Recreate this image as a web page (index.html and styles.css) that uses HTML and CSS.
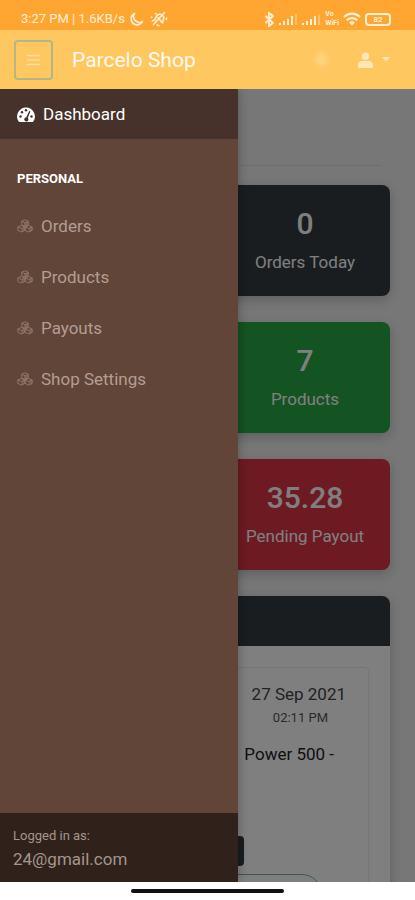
FILE: index.html
```html
<!DOCTYPE html>
<html lang="en">
<head>
<meta charset="utf-8">
<meta name="viewport" content="width=device-width, initial-scale=1">
<title>Parcelo Shop</title>
<link rel="stylesheet" href="styles.css">
</head>
<body>
<svg width="0" height="0" class="sprite" aria-hidden="true">
  <symbol id="cubes" viewBox="0 0 16 14">
    <g fill="none" stroke="currentColor" stroke-width=".9" stroke-linejoin="round">
      <path d="M8 .8l3.300 1.400v3.600L8 7.300 4.700 5.800V2.200z"/>
      <path d="M4.300 6.500l3.500 1.400v3.600L4.300 13 .8 11.500V7.900z"/>
      <path d="M11.700 6.500l3.500 1.400v3.600L11.700 13 8.200 11.500V7.900z"/>
      <path d="M4.700 2.400L8 3.800l3.300-1.400M8 3.800v3.300M.8 8l3.500 1.500L7.800 8M8.200 8l3.500 1.500L15.200 8"/>
    </g>
    <path fill="currentColor" d="M8 3.800l3.300-1.400v3.400L8 7.300zM4.300 9.500L7.800 8v3.500L4.300 13zM11.700 9.500L15.200 8v3.500L11.700 13z" opacity=".5"/>
  </symbol>
  <symbol id="signal" viewBox="0 0 19 12">
    <g fill="currentColor"><path d="M0 10h2v2H0zM4 8h2v4H4zM8 6h2v6H8zM12 3h2v9h-2z"/><path d="M16 1h2v11h-2z" opacity=".35"/></g>
  </symbol>
</svg>

<div class="status">
  <span class="status-text">3:27 PM | 1.6KB/s</span>
  <svg width="15" height="15" viewBox="0 0 15 15"><path d="M5.500 1.500A6 6 0 1 0 13.500 9.500 5.800 5.800 0 0 1 5.500 1.500z" fill="none" stroke="currentColor" stroke-width="1.700" stroke-linejoin="round"/></svg>
  <svg class="bell" width="18" height="16" viewBox="0 0 18 16"><g fill="none" stroke="currentColor" stroke-width="1.600" stroke-linecap="round" stroke-linejoin="round"><path d="M2.500 10l2.500-1.500C6 5 8 2.500 11 3.500S14.500 7 13 9.500L12.500 12M14.500 1.500L3.500 13.500M8 6.500l4 5M7 14l2 .8"/><path d="M1.500 6v.5M16.500 7v1.500M5.500 2.500l.5.500"/></g></svg>
  <span class="status-gap"></span>
  <svg width="11" height="15" viewBox="0 0 11 15"><path d="M1.500 4l7.500 7-4 3.200V.8L9 4l-7.500 7" fill="none" stroke="currentColor" stroke-width="1.900"/></svg>
  <svg width="19" height="12"><use href="#signal"/></svg>
  <svg width="19" height="12"><use href="#signal"/></svg>
  <span class="vowifi"><span>Vo</span><span>WiFi</span></span>
  <svg width="18" height="14" viewBox="0 0 18 14"><g fill="none" stroke="currentColor" stroke-width="2.200"><path d="M1 5c4.500-4.500 11.500-4.500 16 0M3.700 8.300c3-3 7.600-3 10.600 0"/></g><path d="M6 10.500c1.800-1.600 4.200-1.600 6 0l-3 3z" fill="currentColor"/></svg>
  <span class="battery">82</span>
</div>

<header class="topbar">
  <button class="menu" type="button" aria-label="Toggle menu">
    <svg width="13" height="12" viewBox="0 0 13 12"><path d="M0 1.500h13M0 6h13M0 10.500h13" stroke="currentColor" stroke-width="1.500"/></svg>
  </button>
  <a class="brand" href="#">Parcelo Shop</a>
  <span class="dot"></span>
  <button class="user" type="button" aria-label="Account">
    <svg width="15" height="16" viewBox="0 0 16 17"><circle cx="8" cy="4.500" r="4" fill="currentColor"/><path d="M0 17v-3c0-3 2-4.500 4.500-4.500h7C14 9.500 16 11 16 14v3z" fill="currentColor"/></svg>
    <svg width="8" height="5" viewBox="0 0 8 5"><path d="M0 0h8L4 4.500z" fill="currentColor"/></svg>
  </button>
</header>

<div class="stage">
  <main class="content">
    <hr class="rule">
    <div class="stats">
      <section class="stat dark"><strong>0</strong><span>Orders Today</span></section>
      <section class="stat green"><strong>7</strong><span>Products</span></section>
      <section class="stat red"><strong>35.28</strong><span>Pending Payout</span></section>
    </div>
    <section class="panel">
      <div class="panel-head"></div>
      <div class="panel-body">
        <article class="order">
          <div class="when"><span>27 Sep 2021</span><small>02:11 PM</small></div>
          <p class="item">Power 500 -</p>
          <div class="tag"></div>
          <div class="pill"></div>
        </article>
      </div>
    </section>
  </main>
  <div class="scrim"></div>
  <aside class="drawer">
    <nav class="nav">
      <a class="active" href="#"><svg width="18" height="15" viewBox="0 0 18 15"><path d="M9 .5a9 9 0 0 0-7.500 13.800l.8.700h13.400l.8-.700A9 9 0 0 0 9 .5z" fill="currentColor"/><g fill="#46322a"><circle cx="3.500" cy="9.500" r="1.200"/><circle cx="5" cy="5.200" r="1.200"/><circle cx="9" cy="3.200" r="1.200"/><circle cx="14.500" cy="9.500" r="1.200"/><path d="M12.200 4l1.200.6-2.600 6.300a2.100 2.100 0 1 1-1.500-.6z"/></g></svg>Dashboard</a>
      <h2>PERSONAL</h2>
      <a href="#"><svg width="16" height="14"><use href="#cubes"/></svg>Orders</a>
      <a href="#"><svg width="16" height="14"><use href="#cubes"/></svg>Products</a>
      <a href="#"><svg width="16" height="14"><use href="#cubes"/></svg>Payouts</a>
      <a href="#"><svg width="16" height="14"><use href="#cubes"/></svg>Shop Settings</a>
    </nav>
    <footer class="login"><small>Logged in as:</small><span>24@gmail.com</span></footer>
  </aside>
</div>
<div class="home"><span></span></div>
</body>
</html>
```
FILE: styles.css
```css
* { box-sizing: border-box; }
body {
  margin: 0;
  height: 100vh;
  display: flex;
  flex-direction: column;
  font: 17px/24px Roboto, "Liberation Sans", sans-serif;
  background: #fff;
}
a { color: inherit; text-decoration: none; }
button { border: 0; background: none; padding: 0; color: inherit; font: inherit; }
.sprite { position: absolute; }

.status {
  flex: none;
  height: 30px;
  padding: 8px 24px 0 21px;
  display: flex;
  align-items: center;
  gap: 4px;
  background: #ffa532;
  color: #fff1d6;
}
.status svg { flex: none; }
.status-text { font-size: 13px; line-height: 20px; white-space: nowrap; }
.bell { margin-left: 2px; }
.status-gap { flex: 1; }
.vowifi { display: flex; flex-direction: column; font-size: 7px; line-height: 9px; font-weight: 700; }
.battery {
  width: 26px;
  height: 13px;
  border: 2px solid currentColor;
  border-radius: 4px;
  font-size: 8px;
  line-height: 9px;
  font-weight: 700;
  text-align: center;
}

.topbar {
  flex: none;
  height: 59px;
  padding: 0 25px 0 14px;
  display: flex;
  align-items: center;
  background: #ffc75f;
  color: #fff;
}
.menu {
  width: 39px;
  height: 40px;
  border: 2px solid #b5b58a;
  border-radius: 4px;
  display: grid;
  place-items: center;
  color: #ffdf9f;
}
.brand { margin-left: 19px; flex: 1; font-size: 21px; color: #fffaf0; }
.dot { width: 13px; height: 15px; border-radius: 50%; background: #ffd27c; filter: blur(2px); }
.user { margin-left: 30px; display: flex; align-items: center; gap: 9px; color: #ffe6b6; }

.stage { flex: 1; min-height: 0; position: relative; overflow: hidden; background: #eee; }
.content { padding: 76px 25px 0; }
.rule { margin: 0 8px 19px 0; border: 0; border-top: 1px solid #dcdcdc; }
.stats { display: grid; grid-template-columns: 1fr 1fr; gap: 26px 25px; }
.stat {
  grid-column: 2;
  height: 111px;
  padding-top: 23px;
  border-radius: 8px;
  display: flex;
  flex-direction: column;
  align-items: center;
  gap: 10px;
  white-space: nowrap;
  color: #fff;
  box-shadow: 0 4px 12px rgba(0, 0, 0, .2);
}
.stat strong { font-size: 30px; line-height: 32px; font-weight: 500; }
.dark { background: #343a40; }
.green { background: #28a745; }
.red { background: #dc3545; }

.panel { margin-top: 26px; border-radius: 8px; background: #fff; box-shadow: 0 4px 12px rgba(0, 0, 0, .2); }
.panel-head { height: 50px; border-radius: 8px 8px 0 0; background: #343a40; }
.panel-body { padding: 21px; }
.order { height: 280px; padding: 14px 22px; border: 1px solid #ececec; border-radius: 4px; color: #444; }
.when { display: flex; flex-direction: column; align-items: flex-end; }
.when small { font-size: 13px; margin-right: 18px; color: #555; }
.item { margin: 12px 12px 0; text-align: right; color: #222; }
.tag { margin: 70px 102px 0 0; height: 30px; border-radius: 4px; background: #343a40; }
.pill { margin-top: 8px; margin-right: 24px; height: 40px; border: 1px solid #74b98a; border-radius: 20px; }

.scrim { position: absolute; inset: 0; background: rgba(0, 0, 0, .5); }
.drawer {
  position: absolute;
  inset: 0 auto 0 0;
  width: 238px;
  display: flex;
  flex-direction: column;
  background: #614539;
  color: #b39d93;
  box-shadow: 0 0 10px rgba(0, 0, 0, .3);
}
.nav { flex: 1; }
.nav a { display: flex; align-items: center; gap: 8px; height: 51px; padding-left: 17px; }
.nav svg { flex: none; color: #94796d; }
.nav .active { height: 50px; background: #46322a; color: #fff; }
.nav .active svg { color: #fff; }
.nav h2 { margin: 27px 0 9px 17px; font-size: 13px; line-height: 25px; font-weight: 700; color: #fff; }
.login { height: 69px; padding: 12px 13px; display: flex; flex-direction: column; background: #30221b; color: #a3958e; }
.login small { font-size: 13px; line-height: 22px; }

.home { flex: none; height: 18px; display: flex; justify-content: center; align-items: center; background: #fff; }
.home span { width: 153px; height: 4px; border-radius: 2px; background: #111; }
```
